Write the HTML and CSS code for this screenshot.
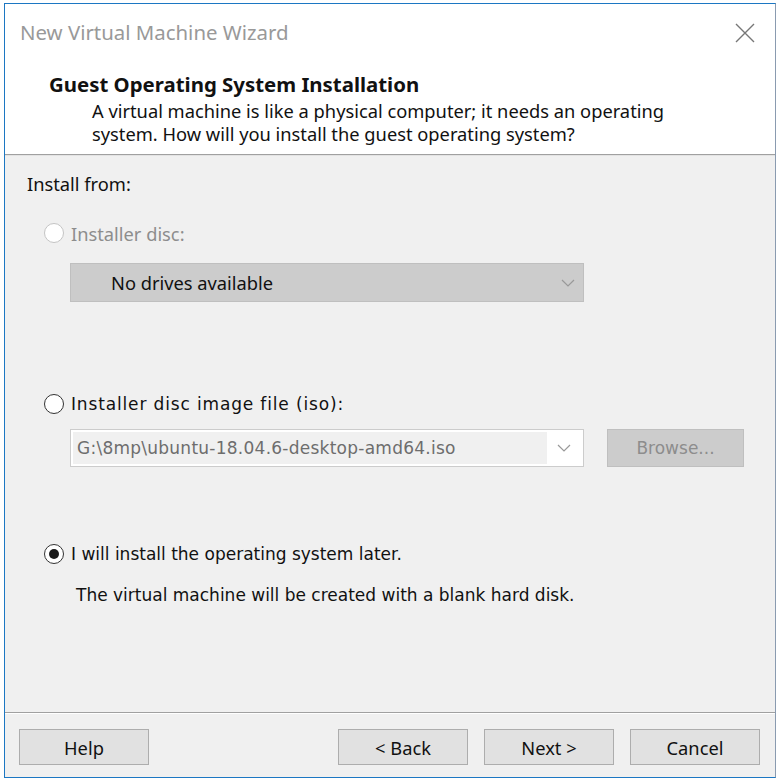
FILE: index.html
```html
<!DOCTYPE html>
<html lang="en">
<head>
    <meta charset="UTF-8">
    <title>New Virtual Machine Wizard</title>
    <link rel="stylesheet" href="styles.css">
</head>
<body>

    <div class="window">
        <div class="titlebar">
            <span class="title">New Virtual Machine Wizard</span>
            <svg class="close" width="20" height="20" viewBox="0 0 20 20">
                <path d="M1 1 L19 19 M19 1 L1 19" stroke="#777" stroke-width="1.4" fill="none"/>
            </svg>
        </div>

        <div class="header">
            <div class="header-title">Guest Operating System Installation</div>
            <div class="header-text">
                A virtual machine is like a physical computer; it needs an operating<br>
                system. How will you install the guest operating system?
            </div>
        </div>

        <div class="content">
            <div class="section-label">Install from:</div>

            <div class="radio-row disabled first">
                <span class="radio"></span>
                <span>Installer disc:</span>
            </div>
            <div class="select disabled">
                <span class="select-text">No drives available</span>
                <svg class="chevron" width="14" height="8" viewBox="0 0 14 8">
                    <path d="M1 1 L7 7 L13 1" stroke="#999" stroke-width="1.2" fill="none"/>
                </svg>
            </div>

            <div class="radio-row second">
                <span class="radio"></span>
                <span class="tahoma wide">Installer disc image file (iso):</span>
            </div>
            <div class="iso-row">
                <div class="combo">
                    <span class="combo-text tahoma">G:\8mp\ubuntu-18.04.6-desktop-amd64.iso</span>
                    <span class="combo-arrow">
                        <svg width="14" height="8" viewBox="0 0 14 8">
                            <path d="M1 1 L7 7 L13 1" stroke="#999" stroke-width="1.2" fill="none"/>
                        </svg>
                    </span>
                </div>
                <button class="btn btn-disabled tahoma">Browse...</button>
            </div>

            <div class="radio-row third">
                <span class="radio checked"></span>
                <span class="tahoma">I will install the operating system later.</span>
            </div>
            <div class="note tahoma">The virtual machine will be created with a blank hard disk.</div>
        </div>

        <div class="footer">
            <button class="btn">Help</button>
            <div class="spacer"></div>
            <button class="btn">&lt; Back</button>
            <button class="btn">Next &gt;</button>
            <button class="btn">Cancel</button>
        </div>
    </div>

</body>
</html>
```

FILE: styles.css
```css
* {
    box-sizing: border-box;
}

html, body {
    margin: 0;
    padding: 0;
    background-color: #ffffff;
    font-family: "Noto Sans", "Open Sans", Arial, sans-serif;
    font-size: 18.3px;
    color: #111;
}

.tahoma {
    font-family: "DejaVu Sans", Verdana, sans-serif;
    font-size: 17px;
}

.tahoma.wide {
    letter-spacing: 0.85px;
}

.window {
    margin: 3px 0 0 4px;
    width: 772px;
    height: 775px;
    border: 1px solid #1c77c3;
    border-right-color: #8a9bb0;
    background-color: #f0f0f0;
    display: flex;
    flex-direction: column;
}

.titlebar {
    height: 56px;
    background-color: #ffffff;
    display: flex;
    align-items: center;
    padding: 0 20px 0 15px;
}

.title {
    flex: 1;
    color: #999999;
    font-size: 20.4px;
}

.close {
    margin-top: 2px;
}

.header {
    height: 95px;
    background-color: #ffffff;
    border-bottom: 1px solid #a0a0a0;
    box-shadow: 0 1px 0 #ffffff;
    padding: 11px 0 0 44px;
}

.header-title {
    font-weight: bold;
    font-size: 20.4px;
    line-height: 26px;
}

.header-text {
    padding-left: 43px;
    line-height: 23px;
    margin-top: 2px;
}

.content {
    flex: 1;
    padding: 16px 0 0 22px;
    border-top: 1px solid #e3e3e3;
}

.section-label {
    line-height: 24px;
}

.radio-row {
    display: flex;
    align-items: center;
    gap: 7px;
    padding-left: 17px;
    height: 26px;
}

.radio-row.first {
    margin-top: 24px;
}

.radio-row.second {
    margin-top: 89px;
}

.radio-row.third {
    margin-top: 74px;
}

.radio {
    flex-shrink: 0;
    width: 20px;
    height: 20px;
    border-radius: 50%;
    border: 1.5px solid #333;
    background-color: #ffffff;
    display: flex;
    align-items: center;
    justify-content: center;
}

.radio.checked::after {
    content: "";
    width: 10px;
    height: 10px;
    border-radius: 50%;
    background-color: #1a1a1a;
}

.radio-row.disabled {
    color: #8d8d8d;
}

.radio-row.disabled .radio {
    border-color: #c4c4c4;
}

.select {
    margin: 17px 0 0 43px;
    width: 514px;
    height: 39px;
    display: flex;
    align-items: center;
    justify-content: space-between;
    padding: 0 8px 0 40px;
    background-color: #cccccc;
    border: 1px solid #bfbfbf;
}

.iso-row {
    display: flex;
    gap: 23px;
    margin: 12px 0 0 43px;
}

.combo {
    width: 514px;
    height: 38px;
    display: flex;
    background-color: #ffffff;
    border: 1px solid #cccccc;
    padding: 2px;
}

.combo-text {
    flex: 1;
    background-color: #f0f0f0;
    color: #6d6d6d;
    padding-left: 4px;
    letter-spacing: 0.25px;
    display: flex;
    align-items: center;
}

.combo-arrow {
    width: 34px;
    display: flex;
    align-items: center;
    justify-content: center;
}

.note {
    margin: 16px 0 0 49px;
    line-height: 24px;
}

.btn {
    width: 130px;
    height: 36px;
    font-family: inherit;
    font-size: 18.3px;
    color: #111;
    background-color: #e1e1e1;
    border: 1px solid #adadad;
    padding: 0;
}

.btn.btn-disabled {
    width: 137px;
    height: 38px;
    font-family: "DejaVu Sans", Verdana, sans-serif;
    font-size: 17px;
    background-color: #cccccc;
    border-color: #bfbfbf;
    color: #8d8d8d;
}

.footer {
    height: 65px;
    border-top: 1px solid #a0a0a0;
    box-shadow: inset 0 1px 0 #ffffff;
    display: flex;
    align-items: flex-start;
    gap: 16px;
    padding: 16px 15px 0 14px;
}

.spacer {
    flex: 1;
}
```
